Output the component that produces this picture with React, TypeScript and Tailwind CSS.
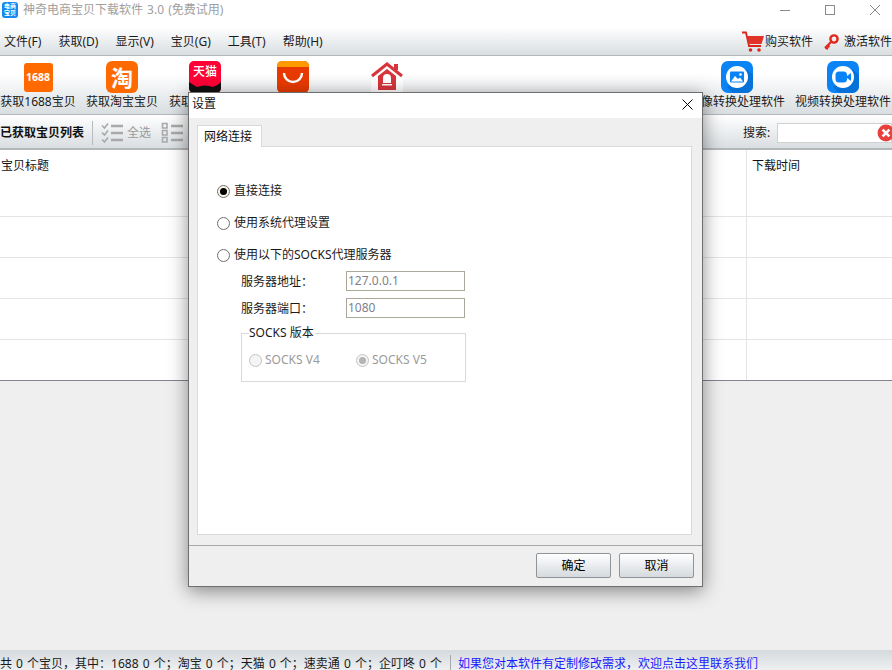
const menus = ['文件(F)', '获取(D)', '显示(V)', '宝贝(G)', '工具(T)', '帮助(H)']

const Radio = ({ on, off }: { on?: boolean; off?: boolean }) => (
  <span
    className={`flex h-[13px] w-[13px] shrink-0 items-center justify-center rounded-full border ${
      off ? 'border-[#c4c4c4] bg-[#f4f4f4]' : on ? 'border-[#6f6f6f] bg-[#fbf6e6]' : 'border-[#6f6f6f] bg-white'
    }`}
  >
    {on && <span className={`h-[7px] w-[7px] rounded-full ${off ? 'bg-[#b4b4b4]' : 'bg-black'}`} />}
  </span>
)

const ToolItem = ({ width, label, children }: { width: string; label: string; children?: React.ReactNode }) => (
  <div className={`flex shrink-0 flex-col items-center ${width}`}>
    <div className="flex h-8 w-8 items-center justify-center">{children}</div>
    <span className="mt-[1px] whitespace-nowrap text-xs leading-[16px] text-[#1a1a1a]">{label}</span>
  </div>
)

const BlueIcon = ({ video }: { video?: boolean }) => (
  <svg width="32" height="32" viewBox="0 0 32 32">
    <rect width="32" height="32" rx="7" fill="#0a84f5" />
    <path d="M6 26 L25 8 L32 14 V25 a7 7 0 0 1 -7 7 H12 Z" fill="#0672d8" />
    <circle cx="16" cy="16" r="11" fill="#fff" />
    {video ? (
      <>
        <rect x="8.5" y="10.5" width="11.5" height="11" rx="3.5" fill="#0a84f5" />
        <path d="M20 15 L24 12 V20 L20 17 Z" fill="#0a84f5" />
      </>
    ) : (
      <>
        <rect x="9" y="10.5" width="14" height="11" rx="1" fill="#0a84f5" />
        <circle cx="19.5" cy="13.5" r="1.3" fill="#fff" />
        <path d="M10 20.5 L14 15 L17 18 L19 16.5 L22 20.5 Z" fill="#fff" />
      </>
    )}
  </svg>
)

const CheckListIcon = () => (
  <svg width="22" height="22" viewBox="0 0 22 22" fill="none" stroke="#a9a9a9">
    <path d="M1 3.5 L3.5 6 L7 1.5 M1 10.5 L3.5 13 L7 8.5 M1 17.5 L3.5 20 L7 15.5" strokeWidth="1.6" />
    <path d="M10 4 H22 M10 11 H22 M10 18 H22" strokeWidth="2.4" />
  </svg>
)

const BoxListIcon = () => (
  <svg width="22" height="22" viewBox="0 0 22 22" fill="none" stroke="#a9a9a9">
    <path d="M1.5 1.5 H6 V6 H1.5 Z M1.5 8.5 H6 V13 H1.5 Z M1.5 15.5 H6 V20 H1.5 Z" strokeWidth="1.6" />
    <path d="M10 4 H22 M10 11 H22 M10 18 H22" strokeWidth="2.4" />
  </svg>
)

const TableRow = () => (
  <div className="flex h-[41px] border-b border-[#e4e4e4]">
    <div className="flex-1" />
    <div className="w-[146px] border-l border-[#e4e4e4]" />
  </div>
)

const SettingsDialog = () => (
  <div className="absolute left-[188px] top-[92px] flex h-[495px] w-[515px] flex-col border border-[#6f6f6f] bg-[#efefef] shadow-[0_4px_18px_rgba(0,0,0,0.45)]">
    <div className="flex h-[25px] shrink-0 items-center justify-between bg-white pb-[3px] pl-[3px] pr-[9px] text-xs text-[#111]">
      <span>设置</span>
      <svg width="11" height="11" viewBox="0 0 11 11" fill="none" stroke="#000" strokeWidth="1">
        <path d="M0.5 0.5 L10.5 10.5 M10.5 0.5 L0.5 10.5" />
      </svg>
    </div>
    <div className="flex flex-1 flex-col px-[8px] pt-[7px]">
      <div className="z-10 -mb-px flex h-[22px] w-[65px] items-center border border-b-0 border-[#d9d9d9] bg-white pl-[6px] text-xs text-[#111]">
        网络连接
      </div>
      <div className="h-[389px] w-[495px] border border-[#d9d9d9] bg-white pl-[19px] pt-[36px] text-xs text-[#1a1a1a]">
        <div className="flex h-4 items-center gap-[4px]"><Radio on />直接连接</div>
        <div className="mt-[16px] flex h-4 items-center gap-[4px]"><Radio />使用系统代理设置</div>
        <div className="mt-[16px] flex h-4 items-center gap-[4px]"><Radio />使用以下的SOCKS代理服务器</div>
        <div className="ml-[24px] mt-[8px] flex h-[20px] items-center">
          <span className="w-[105px] pt-[2px]">服务器地址：</span>
          <span className="flex h-[20px] w-[119px] items-center border border-[#aca899] pl-[1px] text-[#7f7f8c]">127.0.0.1</span>
        </div>
        <div className="ml-[24px] mt-[7px] flex h-[20px] items-center">
          <span className="w-[105px] pt-[2px]">服务器端口：</span>
          <span className="flex h-[20px] w-[119px] items-center border border-[#aca899] pl-[1px] text-[#7f7f8c]">1080</span>
        </div>
        <div className="relative ml-[24px] mt-[15px] h-[49px] w-[225px] border border-[#d9d9d9] pl-[7px] pt-[18px] text-[#9a9a9a]">
          <span className="absolute -top-[8px] left-[7px] bg-white pr-[1px] leading-[14px] text-[#1a1a1a]">SOCKS 版本</span>
          <div className="flex h-4 items-center">
            <Radio off />
            <span className="ml-[3px] w-[91px]">SOCKS V4</span>
            <Radio on off />
            <span className="ml-[3px]">SOCKS V5</span>
          </div>
        </div>
      </div>
    </div>
    <div className="flex h-[41px] shrink-0 items-start justify-end gap-[8px] border-t border-[#a8a8a8] pr-[8px] pt-[7px]">
      {['确定', '取消'].map((text) => (
        <button
          key={text}
          className="h-[25px] w-[75px] rounded-[2px] border border-[#8f9498] bg-gradient-to-b from-[#ffffff] to-[#d5dade] text-xs text-black"
        >
          {text}
        </button>
      ))}
    </div>
  </div>
)

export default function App() {
  return (
    <div className="relative flex h-[670px] w-[892px] flex-col overflow-hidden bg-[#efefef] font-['Noto_Sans','Noto_Sans_CJK_SC',sans-serif] text-xs">
      {/* title bar */}
      <div className="flex h-[27px] shrink-0 items-center bg-white pb-[7px] pl-[2px]">
        <div className="flex h-[16px] w-[16px] flex-col items-center justify-center rounded-[3px] bg-[#1688f0] text-[6px] font-bold leading-[7px] text-white">
          <span>电商</span>
          <span>宝贝</span>
        </div>
        <span className="ml-[5px] text-[12px] text-[#a0a0a0] [word-spacing:1px]">神奇电商宝贝下载软件 3.0 (免费试用)</span>
        <div className="ml-auto flex items-center gap-[35px] pr-[12px]">
          <svg width="10" height="10" viewBox="0 0 10 10"><path d="M0 5.5 H10" stroke="#8a8a8a" /></svg>
          <svg width="10" height="10" viewBox="0 0 10 10"><rect x="0.5" y="0.5" width="9" height="9" fill="none" stroke="#8a8a8a" /></svg>
          <svg width="10" height="10" viewBox="0 0 10 10"><path d="M0 0 L10 10 M10 0 L0 10" stroke="#8a8a8a" /></svg>
        </div>
      </div>

      {/* menu */}
      <div className="flex h-[29px] shrink-0 items-center border-b border-[#b4b7b9] bg-gradient-to-b from-[#ffffff] to-[#d9dee1] pt-[2px] text-[#1a1a1a]">
        <div className="flex gap-[17px] pl-[4px]">
          {menus.map((m) => (
            <span key={m} className="whitespace-nowrap">{m}</span>
          ))}
        </div>
        <div className="ml-auto flex items-center">
          <svg width="22" height="22" viewBox="0 0 22 22" className="mr-[1px]">
            <path d="M0 1.5 H4 L7 15 H19" fill="none" stroke="#d9261c" strokeWidth="1.8" />
            <path d="M5 5 H22 L19.5 13 H6.5 Z" fill="#e03226" />
            <circle cx="8.5" cy="19" r="1.8" fill="#d9261c" />
            <circle cx="17" cy="19" r="1.8" fill="#d9261c" />
          </svg>
          <span>购买软件</span>
          <svg width="16" height="16" viewBox="0 0 16 16" className="ml-[10px] mr-[5px]">
            <circle cx="11" cy="5" r="3.6" fill="none" stroke="#e0281c" strokeWidth="2.4" />
            <path d="M8.5 7.5 L2 14 M2.5 13.5 L5 15 M4.5 11.5 L6.5 13" stroke="#e0281c" strokeWidth="2.2" fill="none" />
          </svg>
          <span className="whitespace-nowrap">激活软件</span>
        </div>
      </div>

      {/* big toolbar */}
      <div className="flex h-[59px] shrink-0 border-b border-[#b4b7b9] bg-gradient-to-b from-[#ffffff] from-30% to-[#d9dee1] pt-[5px]">
        <ToolItem width="w-[76px]" label="获取1688宝贝">
          <div className="flex h-[29px] w-[29px] items-center justify-center rounded-[3px] bg-[#ff6a00] text-[10.5px] font-bold text-white">1688</div>
        </ToolItem>
        <ToolItem width="w-[92px]" label="获取淘宝宝贝">
          <div className="flex h-8 w-8 items-center justify-center rounded-[6px] bg-[#ff6a00] text-[22px] font-bold leading-none text-white">淘</div>
        </ToolItem>
        <ToolItem width="w-[74px]" label="获取天猫宝贝">
          <div className="relative h-8 w-8 overflow-hidden rounded-[5px] bg-[#ff0036] pt-[4px] text-center text-[12px] font-medium leading-[14px] text-white">
            天猫
            <svg width="32" height="32" viewBox="0 0 32 32" className="absolute left-0 top-0">
              <path d="M0 21 Q6 25 8 26 Q16 23 24 26 Q28 25 32 21 V32 H0 Z" fill="#111" />
            </svg>
          </div>
        </ToolItem>
        <ToolItem width="w-[102px]" label="获取速卖通宝贝">
          <svg width="32" height="32" viewBox="0 0 32 32">
            <rect width="32" height="32" rx="5" fill="#e83a00" />
            <path d="M0 5 a5 5 0 0 1 5 -5 H27 a5 5 0 0 1 5 5 V6 H0 Z" fill="#ff9a00" />
            <path d="M7 12 a9 9 0 0 0 18 0" fill="none" stroke="#fff" strokeWidth="2.4" />
          </svg>
        </ToolItem>
        <ToolItem width="w-[86px]" label="获取企叮咚宝贝">
          <svg width="32" height="32" viewBox="0 0 32 32">
            <rect width="32" height="32" fill="#fff" />
            <path d="M1 15 L16 3 L31 15" fill="none" stroke="#d8343c" strokeWidth="3" />
            <rect x="23" y="3" width="4" height="6" fill="#d8343c" />
            <path d="M7 15 L16 8 L25 15 V29 H7 Z" fill="#d8343c" />
            <path d="M16 13 a4 4 0 0 1 4 4 V22 H12 V17 a4 4 0 0 1 4 -4 Z M11 23 H21 V24.5 H11 Z" fill="#fff" />
          </svg>
        </ToolItem>
        <div className="ml-auto flex pr-[1px]">
          <ToolItem width="w-[96px]" label="图像转换处理软件"><BlueIcon /></ToolItem>
          <div className="w-[10px]" />
          <ToolItem width="w-[96px]" label="视频转换处理软件"><BlueIcon video /></ToolItem>
        </div>
      </div>

      {/* list toolbar */}
      <div className="flex h-[35px] shrink-0 items-center border-b-2 border-[#b4b7b9] bg-gradient-to-b from-[#ffffff] to-[#d9dee1] pt-[2px]">
        <span className="w-[92px] font-bold text-[#111]">已获取宝贝列表</span>
        <div className="h-[24px] w-px bg-[#b9bcbe]" />
        <div className="ml-[8px] flex items-center gap-[4px] text-[#9a9a9a]">
          <CheckListIcon />全选
        </div>
        <div className="ml-[10px] flex items-center gap-[4px] text-[#9a9a9a]">
          <BoxListIcon />反选
        </div>
        <span className="ml-auto w-[34px] whitespace-nowrap text-[#1a1a1a]">搜索:</span>
        <div className="relative h-[20px] w-[115px] border border-[#d0d0d0] bg-white">
          <svg width="18" height="18" viewBox="0 0 16 16" className="absolute -right-[4px] top-0">
            <circle cx="8" cy="8" r="7.5" fill="#e8403c" />
            <path d="M5 5 L11 11 M11 5 L5 11" stroke="#fff" strokeWidth="2.4" />
          </svg>
        </div>
      </div>

      {/* table */}
      <div className="h-[231px] shrink-0 border-b border-[#83838f] bg-white">
        <div className="flex h-[67px] border-b border-[#e4e4e4]">
          <div className="flex-1 pl-[1px] pt-[7px] text-[12px] leading-[18px] text-[#111]">宝贝标题</div>
          <div className="w-[146px] border-l border-[#e4e4e4] pl-[5px] pt-[7px] text-[12px] leading-[18px] text-[#111]">下载时间</div>
        </div>
        <TableRow />
        <TableRow />
        <TableRow />
        <div className="flex h-[40px]">
          <div className="flex-1" />
          <div className="w-[146px] border-l border-[#e4e4e4]" />
        </div>
      </div>

      <div className="flex-1" />

      {/* status */}
      <div className="flex h-[20px] shrink-0 items-end bg-gradient-to-b from-[#d5dade] to-[#eef0f1] leading-[13px] text-[#1a1a1a]">
        <span className="w-[450px] whitespace-nowrap [word-spacing:1px]">共 0 个宝贝，其中：1688 0 个；淘宝 0 个；天猫 0 个；速卖通 0 个；企叮咚 0 个</span>
        <div className="h-[15px] w-px bg-[#a8a8a8]" />
        <span className="ml-[7px] whitespace-nowrap text-[#1a1aff]">如果您对本软件有定制修改需求，欢迎点击这里联系我们</span>
      </div>

      <SettingsDialog />
    </div>
  )
}
